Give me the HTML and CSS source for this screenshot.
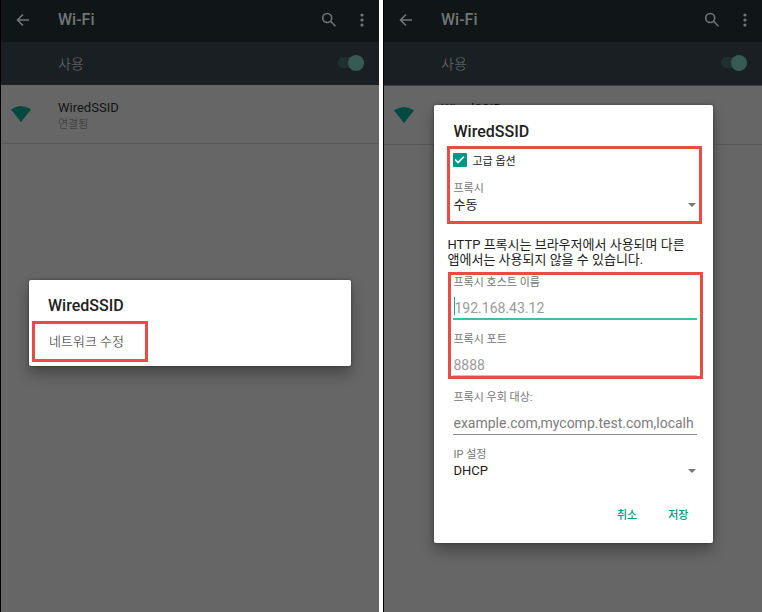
FILE: index.html
```html
<!DOCTYPE html>
<html lang="ko">
<head>
<meta charset="utf-8">
<meta name="viewport" content="width=device-width, initial-scale=1">
<title>Wi-Fi</title>
<link rel="stylesheet" href="styles.css">
</head>
<body>
<main class="screens">
  <section class="phone">
    <header class="app-bar">
      <button class="icon-button back" type="button" aria-label="뒤로"><svg viewBox="0 0 16 16" width="16" height="16"><path d="M14 8H3M8 2.500L2.500 8L8 13.500"/></svg></button>
      <h1 class="app-title">Wi-Fi</h1>
      <button class="icon-button" type="button" aria-label="검색"><svg viewBox="0 0 16 16" width="16" height="16"><circle cx="6.200" cy="6" r="4.500"/><path d="M9.500 9.300L14.500 14.300"/></svg></button>
      <button class="icon-button more" type="button" aria-label="더보기"><svg class="dots" viewBox="0 0 4 16" width="4" height="16"><circle cx="2" cy="3" r="1.600"/><circle cx="2" cy="8" r="1.600"/><circle cx="2" cy="13" r="1.600"/></svg></button>
    </header>
    <div class="switch-bar">
      <label for="wifi-left">사용</label>
      <input class="switch" id="wifi-left" type="checkbox" checked>
    </div>
    <div class="network">
      <svg class="wifi" viewBox="0 0 20 16" width="20" height="16"><path d="M0 3.500Q10 -3.500 20 3.500L10 16Z"/></svg>
      <div>
        <div class="network-name">WiredSSID</div>
        <div class="network-state">연결됨</div>
      </div>
    </div>
    <div class="overlay">
      <div class="dialog menu-dialog" role="dialog" aria-labelledby="menu-title">
        <h2 class="dialog-title" id="menu-title">WiredSSID</h2>
        <button class="menu-item highlight" type="button">네트워크 수정</button>
      </div>
    </div>
  </section>

  <section class="phone">
    <header class="app-bar">
      <button class="icon-button back" type="button" aria-label="뒤로"><svg viewBox="0 0 16 16" width="16" height="16"><path d="M14 8H3M8 2.500L2.500 8L8 13.500"/></svg></button>
      <h1 class="app-title">Wi-Fi</h1>
      <button class="icon-button" type="button" aria-label="검색"><svg viewBox="0 0 16 16" width="16" height="16"><circle cx="6.200" cy="6" r="4.500"/><path d="M9.500 9.300L14.500 14.300"/></svg></button>
      <button class="icon-button more" type="button" aria-label="더보기"><svg class="dots" viewBox="0 0 4 16" width="4" height="16"><circle cx="2" cy="3" r="1.600"/><circle cx="2" cy="8" r="1.600"/><circle cx="2" cy="13" r="1.600"/></svg></button>
    </header>
    <div class="switch-bar ruled">
      <label for="wifi-right">사용</label>
      <input class="switch" id="wifi-right" type="checkbox" checked>
    </div>
    <div class="network">
      <svg class="wifi" viewBox="0 0 20 16" width="20" height="16"><path d="M0 3.500Q10 -3.500 20 3.500L10 16Z"/></svg>
      <div>
        <div class="network-name">WiredSSID</div>
      </div>
    </div>
    <div class="overlay">
      <form class="dialog form-dialog" role="dialog" aria-labelledby="form-title">
        <h2 class="dialog-title" id="form-title">WiredSSID</h2>
        <div class="group highlight">
          <div class="check-row">
            <input class="check" id="advanced" type="checkbox" checked>
            <label for="advanced">고급 옵션</label>
          </div>
          <div class="field">
            <label for="proxy">프록시</label>
            <div class="select-wrap">
              <select id="proxy"><option>수동</option></select>
              <svg class="arrow" viewBox="0 0 8 4" width="8" height="4"><path d="M0 0H8L4 4Z"/></svg>
            </div>
          </div>
        </div>
        <p class="note">HTTP 프록시는 브라우저에서 사용되며 다른 앱에서는 사용되지 않을 수 있습니다.</p>
        <div class="group host-group highlight">
          <div class="field focused">
            <label for="host">프록시 호스트 이름</label>
            <input class="text" id="host" type="text" placeholder="192.168.43.12">
          </div>
          <div class="field">
            <label for="port">프록시 포트</label>
            <input class="text pale" id="port" type="text" placeholder="8888">
          </div>
        </div>
        <div class="plain-group">
          <div class="field">
            <label for="bypass">프록시 우회 대상:</label>
            <input class="text strong" id="bypass" type="text" placeholder="example.com,mycomp.test.com,localh">
          </div>
          <div class="field">
            <label for="ip">IP 설정</label>
            <div class="select-wrap">
              <select id="ip"><option>DHCP</option></select>
              <svg class="arrow" viewBox="0 0 8 4" width="8" height="4"><path d="M0 0H8L4 4Z"/></svg>
            </div>
          </div>
        </div>
        <div class="actions">
          <button type="button">취소</button>
          <button type="button">저장</button>
        </div>
      </form>
    </div>
  </section>
</main>
</body>
</html>
```

FILE: styles.css
```css
* { box-sizing: border-box; }

body {
  margin: 0;
  background: #fff;
  color: #212121;
  font-family: Roboto, "Noto Sans CJK KR", sans-serif;
  font-size: 13px;
}

h1, h2, p { margin: 0; }

button, input, select { font: inherit; color: inherit; margin: 0; }

button { border: 0; background: none; padding: 0; }

svg { display: block; }

.screens {
  display: grid;
  grid-template-columns: 1fr 1fr;
  gap: 4px;
  min-height: 100vh;
}

.phone {
  position: relative;
  border-left: 1px solid #000;
  background: #666;
}

.app-bar {
  display: flex;
  align-items: center;
  height: 42px;
  padding: 0 15px 3px 14px;
  background: #101617;
  color: #727576;
}

.app-title {
  flex: 1;
  font-size: 16px;
  font-weight: 500;
  line-height: 20px;
}

.icon-button svg {
  fill: none;
  stroke: currentColor;
  stroke-width: 1.6;
}

.icon-button .dots { fill: currentColor; stroke: none; }

.back { margin-right: 27px; }

.more { margin-left: 23px; }

.switch-bar {
  display: flex;
  align-items: center;
  justify-content: space-between;
  height: 43px;
  padding: 0 15px 2px 57px;
  background: #191f23;
  color: #6c7072;
  font-size: 14px;
  font-weight: 300;
}

.switch-bar.ruled { height: 44px; border-bottom: 1px solid #3c4042; }

.switch {
  appearance: none;
  display: flex;
  align-items: center;
  justify-content: flex-end;
  width: 26px;
  height: 11px;
  border-radius: 6px;
  background: #20302f;
}

.switch::before {
  content: "";
  flex: none;
  width: 16px;
  height: 16px;
  border-radius: 50%;
  background: #375a54;
}

.network {
  display: flex;
  gap: 27px;
  height: 59px;
  padding: 14px 10px 0;
  border-bottom: 1px solid #585858;
}

.wifi { margin-top: 7px; fill: #00493f; }

.network-name { color: #141414; line-height: 17px; }

.network-state { color: #343434; font-size: 11px; font-weight: 300; line-height: 17px; }

.overlay {
  position: absolute;
  inset: 0;
  display: flex;
  align-items: center;
  justify-content: center;
  padding: 36px 28px 0;
}

.dialog {
  border-radius: 2px;
  background: #fff;
  box-shadow: 0 8px 14px rgba(0, 0, 0, 0.3), 0 0 3px rgba(0, 0, 0, 0.4);
}

.dialog-title {
  padding: 16px 19px 5px;
  font-size: 16px;
  font-weight: 500;
  line-height: 20px;
}

.highlight { border: 3px solid #eb4b45; }

.menu-dialog { width: 100%; margin-bottom: 2px; padding-bottom: 4px; }

.menu-item {
  display: block;
  height: 41px;
  margin-left: 3px;
  padding: 0 21px 3px 14px;
  font-weight: 300;
}

.form-dialog { width: 279px; }

.form-dialog .dialog-title { padding: 17px 20px 4px; }

.group {
  margin: 0 11px 0 13px;
  padding: 0 2px 8px 3px;
}

.check-row {
  display: flex;
  align-items: center;
  gap: 6px;
  height: 22px;
  margin-bottom: 10px;
  font-size: 11px;
}

.check {
  appearance: none;
  display: grid;
  place-items: center;
  width: 14px;
  height: 14px;
  border-radius: 1px;
  background: #009688;
}

.check::before {
  content: "";
  width: 10px;
  height: 8px;
  background: #fff;
  clip-path: polygon(0 50%, 12% 36%, 36% 66%, 88% 2%, 100% 16%, 36% 96%);
}

.field { position: relative; }

.field label {
  display: block;
  padding-left: 1px;
  color: #757575;
  font-size: 11px;
  line-height: 16px;
}

.select-wrap {
  display: grid;
  align-items: center;
}

.select-wrap > * { grid-area: 1 / 1; }

select {
  appearance: none;
  width: 100%;
  height: 16px;
  padding: 0 0 0 1px;
  border: 0;
  background: none;
  line-height: 16px;
}

.arrow { justify-self: end; margin-right: 1px; fill: #757575; pointer-events: none; }

.note {
  margin: 13px 13px 5px 14px;
  line-height: 15px;
  word-break: keep-all;
}

.host-group {
  display: grid;
  gap: 12px;
  margin: 0 10px 0 14px;
  padding: 0 3px 0 2px;
}

.text {
  display: block;
  width: 100%;
  height: 29px;
  padding: 6px 0 0 1px;
  border: 0;
  border-bottom: 1px solid #8c8c8c;
  background: none;
  font-size: 14px;
}

.text::placeholder { color: #9a9a9a; }

.text.strong::placeholder { color: #7c7c7c; }

.text.pale { height: 28px; border-color: #c4c4c4; }

.focused .text { padding-left: 2px; border-bottom: 2px solid #4db6ac; }

/* Text cursor of the active field */
.focused::after {
  content: "";
  position: absolute;
  left: 1px;
  bottom: 5px;
  width: 1px;
  height: 18px;
  background: #26a69a;
}

.plain-group {
  display: grid;
  gap: 12px;
  margin: 11px 16px 0 19px;
}

.actions {
  display: flex;
  justify-content: flex-end;
  gap: 31px;
  padding: 25px 24px 15px;
  color: #009688;
  font-size: 11px;
  font-weight: 500;
  line-height: 24px;
}
```
